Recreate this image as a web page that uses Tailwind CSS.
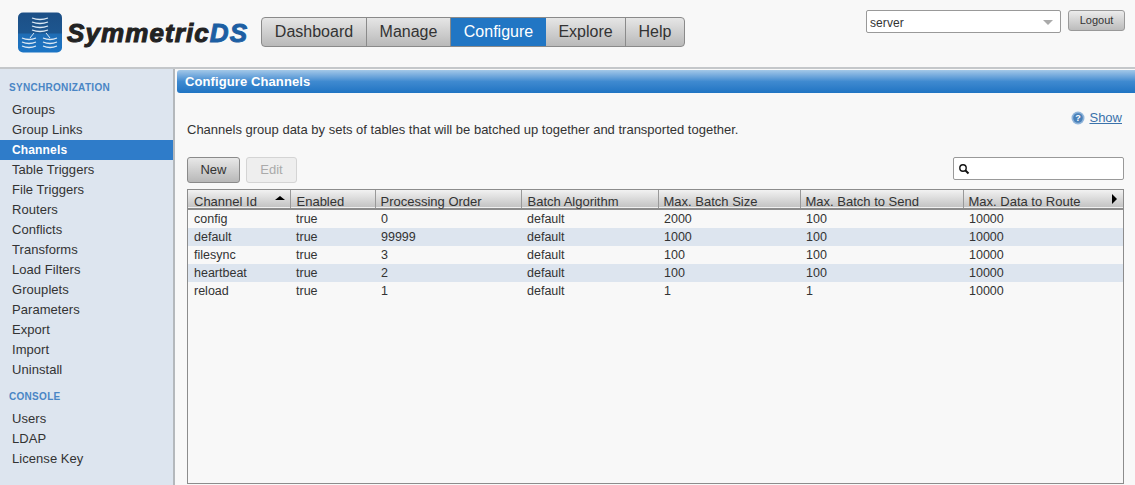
<!DOCTYPE html>
<html lang="en">

<head>
  <meta charset="UTF-8" />
  <title>SymmetricDS</title>
  <script src="https://cdn.jsdelivr.net/npm/@tailwindcss/browser@4"></script>
</head>

<body class="bg-[#f8f8f8] text-[#333] text-[13px] font-['Liberation_Sans',Arial,sans-serif] h-[485px] w-[1135px] overflow-hidden">
  <!-- header -->
  <header class="h-[69px] border-b-2 border-[#c4c7ca] flex items-start relative">
    <div class="flex items-center ml-[18px] mt-[12px] w-[243px]">
      <svg width="44" height="41" viewBox="0 0 44 41" class="shrink-0">
        <defs>
          <linearGradient id="lg" x1="0" y1="0" x2="0" y2="1">
            <stop offset="0" stop-color="#1c4f86" />
            <stop offset="0.5" stop-color="#1d568f" />
            <stop offset="0.55" stop-color="#1f6db5" />
            <stop offset="1" stop-color="#1b75c6" />
          </linearGradient>
        </defs>
        <rect width="44" height="40" y="0.5" rx="5" fill="url(#lg)" />
        <g fill="none" stroke="#dbe8f4" stroke-width="1.3">
          <path d="M14 6q8 3 16 0M14 10q8 3 16 0M14 14q8 3 16 0M14 18q8 3 16 0" />
          <path d="M4 26q7 3 14 0M4 30q7 3 14 0M4 34q7 3 14 0" />
          <path d="M25 26q7 3 14 0M25 30q7 3 14 0M25 34q7 3 14 0" />
          <path d="M16 21l-4 5M28 21l4 5" stroke-width="1" />
        </g>
      </svg>
      <span class="ml-[5px] text-[26px] font-bold italic leading-none tracking-[1.1px] text-[#222] [-webkit-text-stroke:1px_#222]">Symmetric<span class="text-[#1d5fa3] [-webkit-text-stroke:1px_#1d5fa3]">DS</span></span>
    </div>

    <nav class="absolute left-[261px] top-[17px] flex h-[30px] text-[16px] border border-[#8a8a8a] rounded-[4px] overflow-hidden bg-gradient-to-b from-[#e6e6e6] to-[#b9b9b9]">
      <a class="w-[105px] flex items-center justify-center border-r border-[#8a8a8a]">Dashboard</a>
      <a class="w-[84px] flex items-center justify-center border-r border-[#8a8a8a]">Manage</a>
      <a class="w-[95px] flex items-center justify-center text-white bg-[#2176c4]">Configure</a>
      <a class="w-[80px] flex items-center justify-center border-r border-[#8a8a8a]">Explore</a>
      <a class="w-[58px] flex items-center justify-center">Help</a>
    </nav>

    <div class="absolute left-[866px] top-[10px] w-[195px] h-[23px] bg-white border border-[#999] rounded-[2px] flex items-center justify-between pl-[3px] pr-[7px] pt-[2px] text-[12px] tracking-[0.1px]">
      <span>server</span>
      <span class="w-0 h-0 border-x-[5px] border-x-transparent border-t-[5px] border-t-[#aaa]"></span>
    </div>
    <button class="absolute left-[1068px] top-[10px] w-[57px] h-[21px] text-[11px] leading-none border border-[#999] rounded-[3px] bg-gradient-to-b from-[#ececec] to-[#bcbcbc]">Logout</button>
  </header>

  <div class="flex h-[416px]">
    <!-- sidebar -->
    <aside class="w-[175px] shrink-0 bg-[#dde5ef] border-r-2 border-[#b4b8bc] pt-[12px]">
      <h3 class="pl-[9px] h-[14px] leading-[14px] text-[10px] font-bold tracking-[0.3px] text-[#4a86c5]">SYNCHRONIZATION</h3>
      <ul class="mt-[5px] tracking-[0.05px]">
        <li class="h-[20px] leading-[20px] pl-[12px]">Groups</li>
        <li class="h-[20px] leading-[20px] pl-[12px]">Group Links</li>
        <li class="h-[20px] leading-[20px] pl-[12px] text-[12px] tracking-[0.15px] font-bold text-white bg-[#2f7cc9]">Channels</li>
        <li class="h-[20px] leading-[20px] pl-[12px]">Table Triggers</li>
        <li class="h-[20px] leading-[20px] pl-[12px]">File Triggers</li>
        <li class="h-[20px] leading-[20px] pl-[12px]">Routers</li>
        <li class="h-[20px] leading-[20px] pl-[12px]">Conflicts</li>
        <li class="h-[20px] leading-[20px] pl-[12px]">Transforms</li>
        <li class="h-[20px] leading-[20px] pl-[12px]">Load Filters</li>
        <li class="h-[20px] leading-[20px] pl-[12px]">Grouplets</li>
        <li class="h-[20px] leading-[20px] pl-[12px]">Parameters</li>
        <li class="h-[20px] leading-[20px] pl-[12px]">Export</li>
        <li class="h-[20px] leading-[20px] pl-[12px]">Import</li>
        <li class="h-[20px] leading-[20px] pl-[12px]">Uninstall</li>
      </ul>
      <h3 class="mt-[10px] pl-[9px] h-[14px] leading-[14px] text-[10px] font-bold tracking-[0.3px] text-[#4a86c5]">CONSOLE</h3>
      <ul class="mt-[5px] tracking-[0.05px]">
        <li class="h-[20px] leading-[20px] pl-[12px]">Users</li>
        <li class="h-[20px] leading-[20px] pl-[12px]">LDAP</li>
        <li class="h-[20px] leading-[20px] pl-[12px]">License Key</li>
      </ul>
    </aside>

    <!-- main content -->
    <main class="flex-1 min-w-0 pl-[2px] pt-[1px]">
      <div class="h-[23px] leading-[23px] pl-[8px] rounded-l-[3px] font-bold text-[13px] tracking-[0.1px] text-white bg-gradient-to-b from-[#a3c8e8] via-[#3f8ad0] to-[#1f74c3]">Configure Channels</div>

      <div class="pl-[10px] pr-[11px]">
        <div class="flex justify-end items-center h-[10px] mt-[20px]">
          <svg width="14" height="14" viewBox="0 0 14 14">
            <circle cx="7" cy="7" r="6.5" fill="#8fb4da" />
            <circle cx="7" cy="7" r="4.8" fill="#4a80b8" />
            <text x="7" y="10.2" text-anchor="middle" font-size="9" font-weight="bold" fill="#fff">?</text>
          </svg>
          <a class="ml-[4px] mr-[2px] text-[#3a72ab] underline">Show</a>
        </div>
        <p class="h-[14px] leading-[14px]">Channels group data by sets of tables that will be batched up together and transported together.</p>

        <div class="flex items-start justify-between mt-[20px]">
          <div class="flex gap-[6px]">
            <button class="w-[53px] h-[26px] border border-[#8a8a8a] rounded-[3px] bg-gradient-to-b from-[#e8e8e8] to-[#b8b8b8]">New</button>
            <button class="w-[51px] h-[26px] text-[#aaa] border border-[#d4d4d4] rounded-[3px] bg-[#eeeeee]">Edit</button>
          </div>
          <div class="w-[171px] h-[23px] bg-white border border-[#999] rounded-[2px] flex items-center pl-[4px]">
            <svg width="12" height="12" viewBox="0 0 12 12" fill="none" stroke="#111">
              <circle cx="5" cy="5" r="3.2" stroke-width="1.4" />
              <path d="M7.5 7.5l3 3" stroke-width="2" />
            </svg>
          </div>
        </div>

        <div class="mt-[6px] h-[295px] border border-[#8c8c8c] overflow-hidden">
          <table class="w-full table-fixed border-collapse text-[12.5px] leading-[18px]">
            <colgroup>
              <col class="w-[102px]" />
              <col class="w-[85px]" />
              <col class="w-[146px]" />
              <col class="w-[137px]" />
              <col class="w-[142px]" />
              <col class="w-[163px]" />
              <col />
            </colgroup>
            <thead class="text-[13px]">
              <tr class="h-[19px] bg-gradient-to-b from-[#f2f2f2] to-[#c4c4c4] border-b-2 border-[#8c8c8c]">
                <th class="relative font-normal text-left pl-[6px] pt-[4px] leading-[13px] border-r border-[#999]">Channel Id<span class="absolute right-[5px] top-[6px] w-0 h-0 border-x-[5px] border-x-transparent border-b-[4px] border-b-black"></span></th>
                <th class="font-normal text-left pl-[6px] pt-[4px] leading-[13px] border-r border-[#999]">Enabled</th>
                <th class="font-normal text-left pl-[5px] pt-[4px] leading-[13px] border-r border-[#999]">Processing Order</th>
                <th class="font-normal text-left pl-[6px] pt-[4px] leading-[13px] border-r border-[#999]">Batch Algorithm</th>
                <th class="font-normal text-left pl-[5px] pt-[4px] leading-[13px] border-r border-[#999]">Max. Batch Size</th>
                <th class="font-normal text-left pl-[5px] pt-[4px] leading-[13px] border-r border-[#999]">Max. Batch to Send</th>
                <th class="relative font-normal text-left pl-[5px] pt-[4px] leading-[13px]">Max. Data to Route<span class="absolute right-[6px] top-[4px] w-0 h-0 border-y-[5px] border-y-transparent border-l-[5px] border-l-black"></span></th>
              </tr>
            </thead>
            <tbody>
              <tr class="h-[18px]">
                <td class="pl-[6px]">config</td><td class="pl-[6px]">true</td><td class="pl-[6px]">0</td><td class="pl-[6px]">default</td><td class="pl-[6px]">2000</td><td class="pl-[6px]">100</td><td class="pl-[6px]">10000</td>
              </tr>
              <tr class="h-[18px] bg-[#dde5ef]">
                <td class="pl-[6px]">default</td><td class="pl-[6px]">true</td><td class="pl-[6px]">99999</td><td class="pl-[6px]">default</td><td class="pl-[6px]">1000</td><td class="pl-[6px]">100</td><td class="pl-[6px]">10000</td>
              </tr>
              <tr class="h-[18px]">
                <td class="pl-[6px]">filesync</td><td class="pl-[6px]">true</td><td class="pl-[6px]">3</td><td class="pl-[6px]">default</td><td class="pl-[6px]">100</td><td class="pl-[6px]">100</td><td class="pl-[6px]">10000</td>
              </tr>
              <tr class="h-[18px] bg-[#dde5ef]">
                <td class="pl-[6px]">heartbeat</td><td class="pl-[6px]">true</td><td class="pl-[6px]">2</td><td class="pl-[6px]">default</td><td class="pl-[6px]">100</td><td class="pl-[6px]">100</td><td class="pl-[6px]">10000</td>
              </tr>
              <tr class="h-[18px]">
                <td class="pl-[6px]">reload</td><td class="pl-[6px]">true</td><td class="pl-[6px]">1</td><td class="pl-[6px]">default</td><td class="pl-[6px]">1</td><td class="pl-[6px]">1</td><td class="pl-[6px]">10000</td>
              </tr>
            </tbody>
          </table>
        </div>
      </div>
    </main>
  </div>
</body>

</html>
